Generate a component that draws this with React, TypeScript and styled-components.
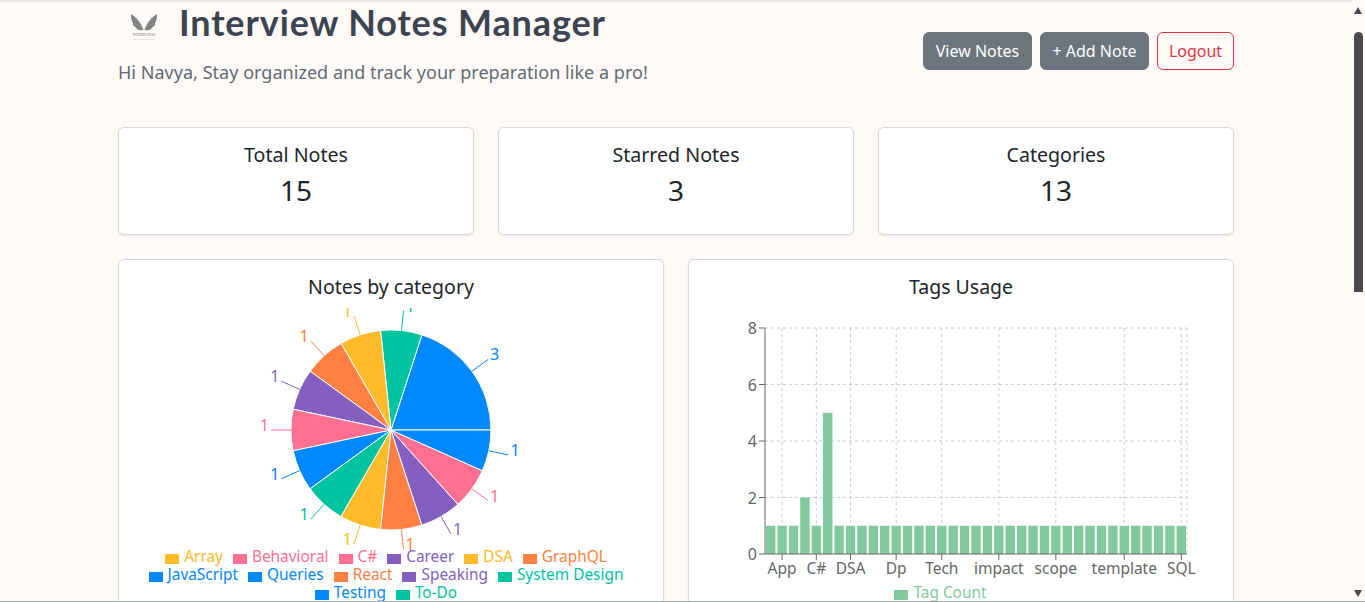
import React from "react";
import styled, { createGlobalStyle } from "styled-components";

const BODY_FONT = `"Noto Sans", "Open Sans", sans-serif`;

const Global = createGlobalStyle`
  html, body { margin: 0; padding: 0; height: 602px; overflow: hidden; background: #fffaf7; }
  body { font-family: ${BODY_FONT}; color: #212529; }
  * { box-sizing: border-box; }
`;

const Page = styled.div`
  width: 1352px;
  height: 602px;
  overflow: hidden;
  padding: 0 118px;
  border-top: 2px solid #e6e6e6;
`;

const Header = styled.header`
  display: flex;
  justify-content: space-between;
  align-items: flex-start;
  height: 125px;
`;

const Brand = styled.div`
  display: flex;
  flex-direction: column;
`;

const TitleRow = styled.div`
  display: flex;
  align-items: center;
  gap: 19px;
  padding-left: 10px;
  height: 43px;
`;

const Title = styled.h1`
  margin: -3px 0 0;
  font: 700 36px/43px "Lato", sans-serif;
  letter-spacing: 0.88px;
  color: #3b4451;
`;

const Subtitle = styled.p`
  margin: 15px 0 0;
  font-size: 18px;
  line-height: 24px;
  letter-spacing: 0.03px;
  color: #5f6b76;
`;

const Actions = styled.div`
  display: flex;
  gap: 8px;
  margin-top: 30px;
`;

const Button = styled.button<{ $outline?: boolean }>`
  width: ${(p) => (p.$outline ? 77 : 109)}px;
  height: 38px;
  padding: 0;
  border-radius: 6px;
  font: 400 16px ${BODY_FONT};
  border: 1px solid ${(p) => (p.$outline ? "#dc3545" : "#6c757d")};
  background: ${(p) => (p.$outline ? "transparent" : "#6c757d")};
  color: ${(p) => (p.$outline ? "#dc3545" : "#fff")};
`;

const StatGrid = styled.section`
  display: grid;
  grid-template-columns: repeat(3, 356px);
  gap: 24px;
`;

const Card = styled.div`
  background: #fff;
  border: 1px solid #d9d9d9;
  border-radius: 6px;
  box-shadow: 0 1px 3px rgba(0, 0, 0, 0.08);
`;

const StatCard = styled(Card)`
  height: 108px;
  display: flex;
  flex-direction: column;
  align-items: center;
  padding-top: 15px;
`;

const StatLabel = styled.div`
  font-size: 19.6px;
  line-height: 24px;
`;

const StatValue = styled.div`
  font-size: 28px;
  line-height: 38px;
  margin-top: 4px;
`;

const ChartGrid = styled.section`
  display: grid;
  grid-template-columns: repeat(2, 546px);
  gap: 24px;
  margin-top: 24px;
`;

const ChartCard = styled(Card)`
  height: 400px;
  padding: 16px;
`;

const ChartTitle = styled.h2`
  margin: 0 0 11px;
  font-size: 19.5px;
  font-weight: 400;
  line-height: 21px;
  text-align: center;
`;

const ChartArea = styled.div`
  position: relative;
  height: 320px;
  svg { display: block; }
`;

const Legend = styled.ul<{ $top: number; $trail: number }>`
  position: absolute;
  left: 0;
  right: 0;
  top: ${(p) => p.$top}px;
  margin: 0;
  padding: 0 ${(p) => p.$trail}px 0 0;
  list-style: none;
  display: flex;
  flex-wrap: wrap;
  justify-content: center;
  column-gap: 10px;
`;

const LegendItem = styled.li<{ $color: string }>`
  display: flex;
  align-items: center;
  gap: 5px;
  height: 18.2px;
  font-size: 15.4px;
  line-height: 18px;
  color: ${(p) => p.$color};
  &::before {
    content: "";
    width: 14px;
    height: 10px;
    margin-top: 3px;
    background: ${(p) => p.$color};
  }
`;

const Scrollbar = styled.div`
  position: fixed;
  top: 0;
  right: 0;
  bottom: 0;
  width: 13px;
`;

const ScrollThumb = styled.div`
  position: absolute;
  top: 32px;
  left: 2px;
  width: 9px;
  height: 260px;
  border-radius: 5px 5px 0 0;
  background: #4a4a4a;
`;

const ScrollArrow = styled.div<{ $down?: boolean }>`
  position: absolute;
  left: 2px;
  ${(p) => (p.$down ? "top: 590px;" : "top: 7px;")}
  width: 0;
  height: 0;
  border-left: 4.5px solid transparent;
  border-right: 4.5px solid transparent;
  ${(p) => (p.$down ? "border-top: 7px solid #4a4a4a;" : "border-bottom: 7px solid #4a4a4a;")}
`;

const BottomEdge = styled.div`
  position: fixed;
  left: 0;
  right: 0;
  bottom: 0;
  height: 1px;
  background: #a3aeaa;
`;

const BLUE = "#0088fe";
const TEAL = "#00c49f";
const YELLOW = "#ffbb28";
const ORANGE = "#ff8042";
const PURPLE = "#845fc0";
const PINK = "#ff6f91";

const legendItems: [string, string][] = [
  ["Array", YELLOW],
  ["Behavioral", PINK],
  ["C#", PINK],
  ["Career", PURPLE],
  ["DSA", YELLOW],
  ["GraphQL", ORANGE],
  ["JavaScript", BLUE],
  ["Queries", BLUE],
  ["React", ORANGE],
  ["Speaking", PURPLE],
  ["System Design", TEAL],
  ["Testing", BLUE],
  ["To-Do", TEAL],
];

// counter-clockwise from 3 o'clock, as drawn
const slices: [number, string][] = [
  [3, BLUE],
  [1, TEAL],
  [1, YELLOW],
  [1, ORANGE],
  [1, PURPLE],
  [1, PINK],
  [1, BLUE],
  [1, TEAL],
  [1, YELLOW],
  [1, ORANGE],
  [1, PURPLE],
  [1, PINK],
  [1, BLUE],
];

const Pie = () => {
  const cx = 256;
  const cy = 122;
  const r = 100;
  const pt = (rad: number, deg: number) => {
    const a = (deg * Math.PI) / 180;
    return [cx + rad * Math.cos(a), cy - rad * Math.sin(a)];
  };
  let start = 0;
  return (
    <svg width={512} height={320}>
      {slices.map(([v, color], i) => {
        const sweep = (v / 15) * 360;
        const end = start + sweep;
        const mid = start + sweep / 2;
        const [x1, y1] = pt(r, start);
        const [x2, y2] = pt(r, end);
        const [lx1, ly1] = pt(r, mid);
        const [lx2, ly2] = pt(r + 20, mid);
        const right = lx2 > cx;
        start = end;
        return (
          <g key={i}>
            <path
              d={`M${cx} ${cy}L${x1} ${y1}A${r} ${r} 0 0 0 ${x2} ${y2}Z`}
              fill={color}
              stroke="#fff"
              strokeWidth={1}
            />
            <line x1={lx1} y1={ly1} x2={lx2} y2={ly2} stroke={color} strokeWidth={1} />
            <text
              x={lx2 + (right ? 2 : -2)}
              y={ly2 + 1}
              fill={color}
              fontSize={16}
              textAnchor={right ? "start" : "end"}
            >
              {v}
            </text>
          </g>
        );
      })}
    </svg>
  );
};

const ticks: [string, number][] = [
  ["App", 1],
  ["C#", 4],
  ["DSA", 7],
  ["Dp", 11],
  ["Tech", 15],
  ["impact", 20],
  ["scope", 25],
  ["template", 31],
  ["SQL", 36],
];

const Bars = () => {
  const x0 = 60;
  const x1 = 482;
  const y0 = 246;
  const yTop = 20;
  const n = 37;
  const band = (x1 - x0) / n;
  const y = (v: number) => y0 - ((y0 - yTop) * v) / 8;
  const values = Array.from({ length: n }, (_, i) => (i === 3 ? 2 : i === 5 ? 5 : 1));
  const tickX = (i: number) => x0 + band * (i + 0.5);
  return (
    <svg width={512} height={320}>
      <g stroke="#ccc" strokeDasharray="3 3" fill="none">
        {[8, 6, 4, 2].map((v) => (
          <line key={v} x1={x0} x2={x1} y1={y(v)} y2={y(v)} />
        ))}
        {ticks.map(([t, i]) => (
          <line key={t} x1={tickX(i)} x2={tickX(i)} y1={yTop} y2={y0} />
        ))}
        <line x1={x1} x2={x1} y1={yTop} y2={y0} />
      </g>
      {values.map((v, i) => (
        <rect key={i} x={x0 + band * i + 1} y={y(v)} width={band - 2} height={y0 - y(v)} fill="#82ca9d" />
      ))}
      <line x1={x0} x2={x0} y1={yTop} y2={y0} stroke="#999" strokeWidth={1.5} />
      <line x1={x0} x2={x1} y1={y0} y2={y0} stroke="#666" />
      {[0, 2, 4, 6, 8].map((v) => (
        <g key={v}>
          <line x1={x0 - 6} x2={x0} y1={y(v)} y2={y(v)} stroke="#666" />
          <text x={x0 - 8} y={y(v) + 6} fontSize={16} fill="#666" textAnchor="end">
            {v}
          </text>
        </g>
      ))}
      {ticks.map(([t, i]) => (
        <g key={t}>
          <line x1={tickX(i)} x2={tickX(i)} y1={y0} y2={y0 + 6} stroke="#666" />
          <text x={tickX(i)} y={y0 + 20} fontSize={15.5} fill="#666" textAnchor="middle">
            {t}
          </text>
        </g>
      ))}
    </svg>
  );
};

const Logo = () => (
  <svg width={32} height={40} viewBox="0 0 32 40">
    <g fill="#7c7e80">
      <path d="M15.5 26 C13 18 8 13 3 10 C3 14 3.5 17 5 19 C4.5 21 6 22.5 7.5 23 C8.5 25.5 12 27 15.5 26Z" />
      <path d="M16.5 26 C19 18 24 13 29 10 C29 14 28.5 17 27 19 C27.5 21 26 22.5 24.5 23 C23.5 25.5 20 27 16.5 26Z" />
    </g>
    <g stroke="#fffaf7" strokeWidth={0.4} fill="none" opacity={0.45}>
      <path d="M14.5 23 L6 13 M13.5 24 L6 19 M17.5 23 L26 13 M18.5 24 L26 19" />
    </g>
    <text x={16} y={32} fontSize={4.2} fill="#77797b" textAnchor="middle" fontFamily="Liberation Serif, serif">
      INTERVIEW
    </text>
    <text x={16} y={36} fontSize={2.6} fill="#a5a7a9" textAnchor="middle" fontFamily="Liberation Serif, serif">
      NOTES MANAGER
    </text>
  </svg>
);

export default function App() {
  return (
    <>
      <Global />
      <Page>
        <Header>
          <Brand>
            <TitleRow>
              <Logo />
              <Title>Interview Notes Manager</Title>
            </TitleRow>
            <Subtitle>Hi Navya, Stay organized and track your preparation like a pro!</Subtitle>
          </Brand>
          <Actions>
            <Button>View Notes</Button>
            <Button>+ Add Note</Button>
            <Button $outline>Logout</Button>
          </Actions>
        </Header>
        <StatGrid>
          <StatCard>
            <StatLabel>Total Notes</StatLabel>
            <StatValue>15</StatValue>
          </StatCard>
          <StatCard>
            <StatLabel>Starred Notes</StatLabel>
            <StatValue>3</StatValue>
          </StatCard>
          <StatCard>
            <StatLabel>Categories</StatLabel>
            <StatValue>13</StatValue>
          </StatCard>
        </StatGrid>
        <ChartGrid>
          <ChartCard>
            <ChartTitle>Notes by category</ChartTitle>
            <ChartArea>
              <Pie />
              <Legend $top={240} $trail={10}>
                {legendItems.map(([name, color]) => (
                  <LegendItem key={name} $color={color}>
                    {name}
                  </LegendItem>
                ))}
              </Legend>
            </ChartArea>
          </ChartCard>
          <ChartCard>
            <ChartTitle>Tags Usage</ChartTitle>
            <ChartArea>
              <Bars />
              <Legend $top={276} $trail={41}>
                <LegendItem $color="#82ca9d">Tag Count</LegendItem>
              </Legend>
            </ChartArea>
          </ChartCard>
        </ChartGrid>
      </Page>
      <Scrollbar>
        <ScrollArrow />
        <ScrollThumb />
        <ScrollArrow $down />
      </Scrollbar>
      <BottomEdge />
    </>
  );
}
